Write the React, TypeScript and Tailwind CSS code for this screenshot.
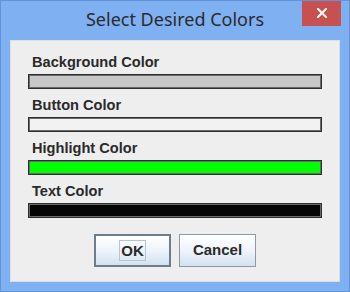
import React from "react";

const font = { fontFamily: '"Liberation Sans", Arial, sans-serif' };
const titleFont = { fontFamily: '"Noto Sans", "Open Sans", sans-serif' };

function Row({ label, fill, first }: { label: string; fill: string; first?: boolean }) {
  return (
    <div className={first ? "flex flex-col" : "flex flex-col mt-[8px]"}>
      <div className="pl-[4px] h-[16px] leading-[16px] text-[14.6px] font-bold text-[#2a2a2a]" style={font}>
        {label}
      </div>
      <div
        className={`mt-[4px] h-[15px] border border-[#2e2e2e] shadow-[inset_0_0_0_1px_#6a6a6a] ${fill}`}
      />
    </div>
  );
}

export default function App() {
  return (
    <div className="w-[350px] h-[292px] bg-[#7fb0f2] border border-[#6193d9] flex flex-col overflow-hidden">
      <div className="relative h-[39px] flex items-start justify-center">
        <div className="mt-[6px] text-[18px] leading-[24px] text-[#2b2b2b]" style={titleFont}>
          Select Desired Colors
        </div>
        <div className="absolute right-[8px] top-[-1px] w-[39px] h-[26px] bg-[#c75050] flex items-center justify-center">
          <svg width="10" height="10" viewBox="0 0 10 10">
            <path d="M1 1 L9 9 M9 1 L1 9" stroke="#fff" strokeWidth="2" strokeLinecap="square" />
          </svg>
        </div>
      </div>
      <div className="mx-[9px] h-[242px] bg-[#eeeeee] border-t border-l border-[#e0e0e0] border-r border-b border-r-[#dcdcdc] border-b-[#dcdcdc] flex flex-col px-[17px] pt-[13px]">
        <Row label="Background Color" fill="bg-[#c8c8c8]" first />
        <Row label="Button Color" fill="bg-[#f2f2f2]" />
        <Row label="Highlight Color" fill="bg-[#00ff00]" />
        <Row label="Text Color" fill="bg-[#050505]" />
        <div className="mt-[16px] flex justify-center gap-[8px]">
          <button
            className="w-[77px] h-[33px] border-2 border-[#6f7c8a] bg-gradient-to-b from-[#ffffff] via-[#eef4fb] to-[#d3e1f2] flex items-center justify-center text-[15px] font-bold text-[#2a2a2a]"
            style={font}
          >
            <span className="border border-[#b8c4d2] px-[1px] leading-[19px]">OK</span>
          </button>
          <button
            className="w-[77px] h-[33px] border border-[#8e99a6] bg-gradient-to-b from-[#ffffff] via-[#eef4fb] to-[#d3e1f2] flex items-center justify-center text-[15px] font-bold text-[#2a2a2a]"
            style={font}
          >
            Cancel
          </button>
        </div>
      </div>
    </div>
  );
}
